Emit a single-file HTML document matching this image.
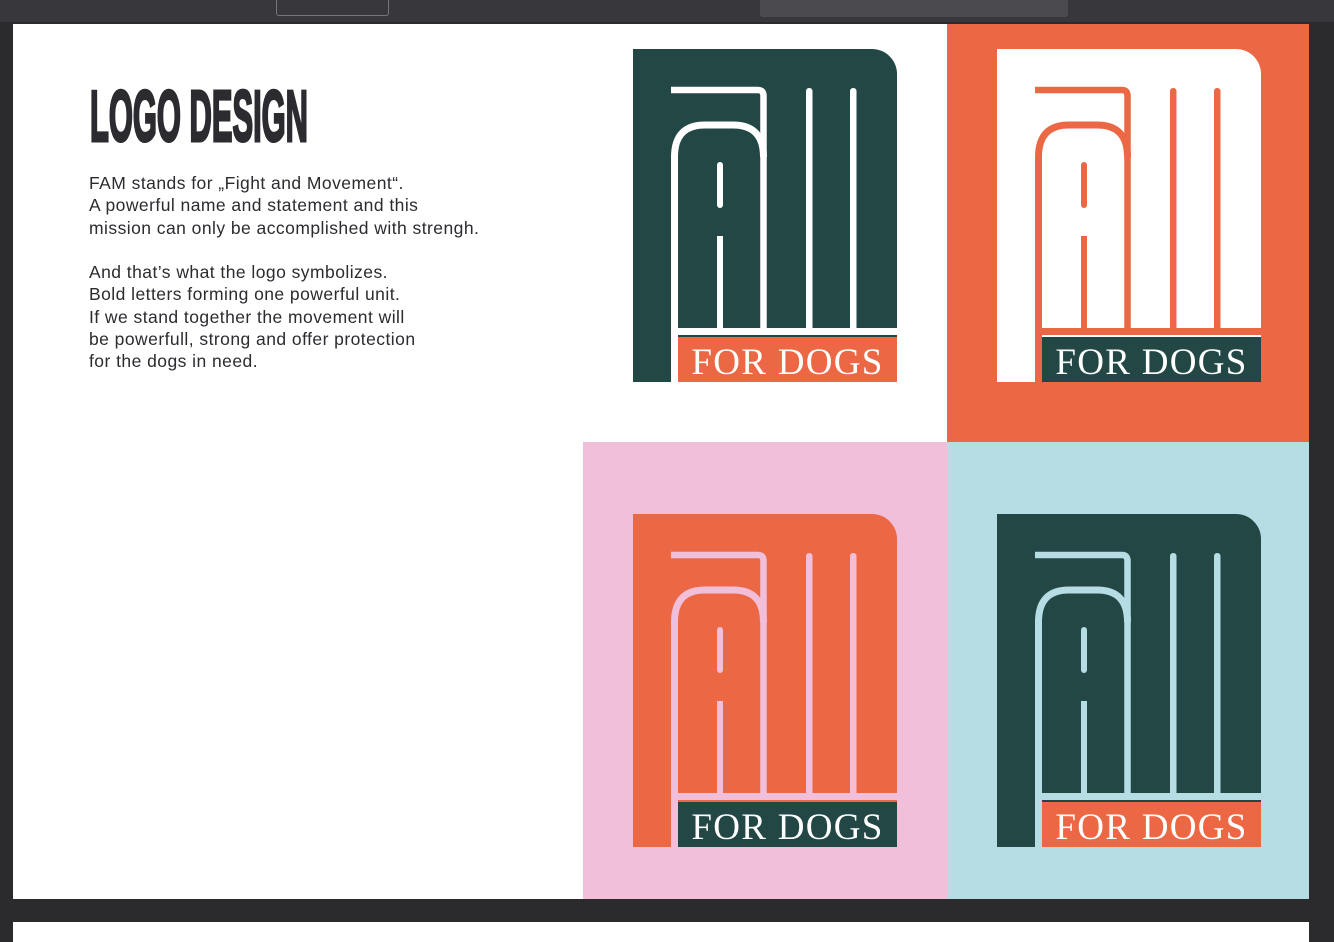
<!DOCTYPE html>
<html><head><meta charset="utf-8"><style>
html,body{margin:0;padding:0;width:1334px;height:938px;overflow:hidden;background:#2b2b2e;font-family:"Liberation Sans",sans-serif}
.abs{position:absolute}
.txt{left:89px;top:172px;font-size:17.5px;letter-spacing:0.45px;line-height:22.3px;color:#2b2b30;white-space:pre}
</style></head><body>
<div class="abs" style="left:0;top:0;width:1334px;height:22px;background:#38383c"></div>
<div class="abs" style="left:276px;top:0;width:111px;height:15px;border:1px solid #77777b;border-top:none;border-radius:0 0 3px 3px"></div>
<div class="abs" style="left:760px;top:0;width:308px;height:17px;background:#4a4a4f;border-radius:0 0 3px 3px"></div>
<div class="abs" style="left:13px;top:24px;width:1296px;height:875px;background:#fff"></div>
<div class="abs" style="left:13px;top:922px;width:1296px;height:20px;background:#fff"></div>
<div class="abs" style="left:947px;top:24px;width:362px;height:418px;background:#ec6845"></div>
<div class="abs" style="left:583px;top:442px;width:364px;height:457px;background:#f2bfdb"></div>
<div class="abs" style="left:947px;top:442px;width:362px;height:457px;background:#b6dde3"></div>

<svg class="abs" style="left:0;top:0" width="1334" height="938">
<text x="90" y="141" font-family="Liberation Sans" font-weight="bold" font-size="72" textLength="218" lengthAdjust="spacingAndGlyphs" fill="#2b2b30" stroke="#2b2b30" stroke-width="3" stroke-linejoin="miter">LOGO DESIGN</text>
</svg>
<div class="abs txt">FAM stands for „Fight and Movement“.
A powerful name and statement and this
mission can only be accomplished with strengh.

And that’s what the logo symbolizes.
Bold letters forming one powerful unit.
If we stand together the movement will
be powerfull, strong and offer protection
for the dogs in need.</div>

<svg class="abs" style="left:0;top:0" width="1334" height="938">
<defs>
<g id="lines">
<path d="M38 41 H125 Q130.5 41 130.5 47 V282" fill="none" stroke-width="6.5"/>
<path d="M41.5 333 V108 Q41.5 76 72 76 H100 Q130.5 76 130.5 108" fill="none" stroke-width="7"/>
</g>
</defs>
<g transform="translate(633,49)">
<path d="M0 0 H239 A25 25 0 0 1 264 25 V333 H0 Z" fill="#224745"/>
<g stroke="#fff"><use href="#lines"/></g>
<g fill="#fff"><rect x="84" y="113" width="6" height="46" rx="3"/><rect x="84" y="187" width="6" height="95"/><rect x="173" y="39" width="6.5" height="243" rx="3"/><rect x="217" y="39" width="6.5" height="243" rx="3"/><rect x="45" y="279" width="219" height="7"/></g>
<rect x="45" y="288" width="219" height="45" fill="#ec6845"/>
<text x="154.5" y="325" text-anchor="middle" font-family="Liberation Serif" font-size="37" letter-spacing="1.3" fill="#fff">FOR DOGS</text>
</g>
<g transform="translate(997,49)">
<path d="M0 0 H239 A25 25 0 0 1 264 25 V333 H0 Z" fill="#fff"/>
<g stroke="#ec6845"><use href="#lines"/></g>
<g fill="#ec6845"><rect x="84" y="113" width="6" height="46" rx="3"/><rect x="84" y="187" width="6" height="95"/><rect x="173" y="39" width="6.5" height="243" rx="3"/><rect x="217" y="39" width="6.5" height="243" rx="3"/><rect x="45" y="279" width="219" height="7"/></g>
<rect x="45" y="288" width="219" height="45" fill="#224745"/>
<text x="154.5" y="325" text-anchor="middle" font-family="Liberation Serif" font-size="37" letter-spacing="1.3" fill="#fff">FOR DOGS</text>
</g>
<g transform="translate(633,514)">
<path d="M0 0 H239 A25 25 0 0 1 264 25 V333 H0 Z" fill="#ec6845"/>
<g stroke="#f2bfdb"><use href="#lines"/></g>
<g fill="#f2bfdb"><rect x="84" y="113" width="6" height="46" rx="3"/><rect x="84" y="187" width="6" height="95"/><rect x="173" y="39" width="6.5" height="243" rx="3"/><rect x="217" y="39" width="6.5" height="243" rx="3"/><rect x="45" y="279" width="219" height="7"/></g>
<rect x="45" y="288" width="219" height="45" fill="#224745"/>
<text x="154.5" y="325" text-anchor="middle" font-family="Liberation Serif" font-size="37" letter-spacing="1.3" fill="#fff">FOR DOGS</text>
</g>
<g transform="translate(997,514)">
<path d="M0 0 H239 A25 25 0 0 1 264 25 V333 H0 Z" fill="#224745"/>
<g stroke="#b6dde3"><use href="#lines"/></g>
<g fill="#b6dde3"><rect x="84" y="113" width="6" height="46" rx="3"/><rect x="84" y="187" width="6" height="95"/><rect x="173" y="39" width="6.5" height="243" rx="3"/><rect x="217" y="39" width="6.5" height="243" rx="3"/><rect x="45" y="279" width="219" height="7"/></g>
<rect x="45" y="288" width="219" height="45" fill="#ec6845"/>
<text x="154.5" y="325" text-anchor="middle" font-family="Liberation Serif" font-size="37" letter-spacing="1.3" fill="#fff">FOR DOGS</text>
</g>
</svg>
</body></html>
